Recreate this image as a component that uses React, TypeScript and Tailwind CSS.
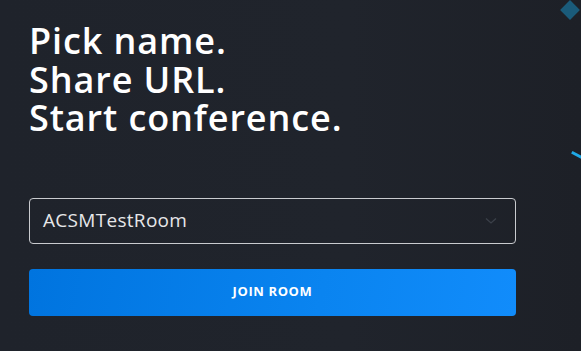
import React from "react";

export default function App() {
  return (
    <div className="relative w-[581px] h-[351px] overflow-hidden bg-[#1f232b] bg-[linear-gradient(90deg,#1f232b_0%,#20242c_60%,#1d2027_100%)] [font-family:'Open_Sans',sans-serif]">
      <div className="absolute right-[4px] top-[3px] w-[14px] h-[14px] rotate-45 bg-[#1a5b7a]" />
      <div className="absolute right-[-4px] top-[154px] w-[14px] h-[3px] rotate-[28deg] bg-[#1fa9e6]" />
      <div className="flex flex-col pl-[29px] pt-[22px] w-[516px]">
        <h1 className="flex flex-col text-[36px] leading-[38.5px] font-semibold text-white tracking-[0.9px]">
          <span className="block h-[38.5px]">Pick name.</span>
          <span className="block h-[38.5px]">Share URL.</span>
          <span className="block h-[38.5px]">Start conference.</span>
        </h1>
        <div className="mt-[60px] h-[46px] w-[487px] rounded-[4px] border border-[#c9cbcf] flex items-center justify-between pl-[13px] pr-[18px]">
          <span className="text-[19px] text-[#e6e7e9] tracking-[0.3px]">ACSMTestRoom</span>
          <svg width="12" height="8" viewBox="0 0 12 8" fill="none" className="text-[#3b4049]">
            <path d="M1 1.5 L6 6 L11 1.5" stroke="currentColor" strokeWidth="1.3" />
          </svg>
        </div>
        <button className="mt-[25px] h-[47px] w-[487px] rounded-[4px] bg-[linear-gradient(100deg,#0074df_0%,#0a84f0_60%,#118cfb_100%)] text-white text-[13px] font-bold tracking-[0.6px]">
          JOIN ROOM
        </button>
      </div>
    </div>
  );
}
